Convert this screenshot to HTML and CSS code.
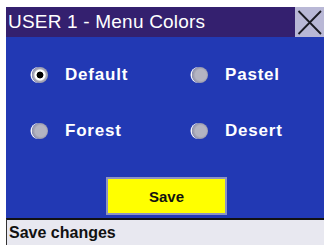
FILE: index.html
```html
<!DOCTYPE html>
<html>
<head>
<meta charset="utf-8">
<link rel="stylesheet" href="styles.css">
</head>
<body>
<div class="frame">
  <div class="title">
    <div class="title-text">USER 1 - Menu Colors</div>
    <div class="close">
      <svg width="29" height="30" viewBox="0 0 29 30"><path d="M3.5 4 L26 27 M26 4 L3.5 27" stroke="#1a1a22" stroke-width="1.8" fill="none"/></svg>
    </div>
  </div>
  <div class="main">
    <div class="options">
      <div class="opt"><span class="radio on"></span><span class="label">Default</span></div>
      <div class="opt"><span class="radio"></span><span class="label">Pastel</span></div>
      <div class="opt"><span class="radio"></span><span class="label">Forest</span></div>
      <div class="opt"><span class="radio"></span><span class="label">Desert</span></div>
    </div>
    <div class="save-row"><div class="save">Save</div></div>
  </div>
  <div class="status">Save changes</div>
</div>
</body>
</html>
```
FILE: styles.css
```css
html, body { margin: 0; padding: 0; background: #ffffff; }
body { font-family: "Liberation Sans", Arial, sans-serif; width: 329px; height: 245px; overflow: hidden; }
.frame { padding: 7px 5px 0 6px; display: flex; flex-direction: column; }
.title { height: 30px; background: #34206f; display: flex; align-items: center; justify-content: space-between; }
.title-text { color: #ffffff; font-size: 19px; padding-left: 2px; letter-spacing: 0.2px; }
.close { width: 29px; height: 30px; background: #b9b8d6; }
.close svg { display: block; }
.main { height: 181px; background: #2239b4; display: flex; flex-direction: column; }
.options { display: grid; grid-template-columns: 160px 1fr; grid-auto-rows: 56px; padding: 10px 0 0 26px; }
.opt { display: flex; align-items: center; }
.radio { width: 16px; height: 16px; border-radius: 50%; background: radial-gradient(circle at 55% 50%, #b4b4c2 0, #b4b4c2 5.5px, #9c9cae 7.5px, #9c9cae 8px); box-shadow: -1.5px 0 0 #f4f4f8; margin-right: 17px; }
.radio.on { background: radial-gradient(circle at 50% 50%, #000 0, #000 3px, #ffffff 3.8px, #ffffff 5px, #a9a9b8 6.2px, #9c9cae 8px); }
.label { color: #ffffff; font-weight: bold; font-size: 17px; letter-spacing: 0.8px; }
.save-row { display: flex; justify-content: center; padding: 18px 0 0 0; padding-left: 3px; }
.save { width: 117px; height: 34px; background: #ffff00; border: 2px solid #8d93c4; display: flex; align-items: center; justify-content: center; font-weight: bold; font-size: 15px; color: #111; }
.status { height: 25px; background: #e8e8f0; border-top: 2px solid #111; border-left: 1px solid #333; font-size: 16px; font-weight: bold; color: #111; display: flex; align-items: center; padding-left: 2px; }
```
